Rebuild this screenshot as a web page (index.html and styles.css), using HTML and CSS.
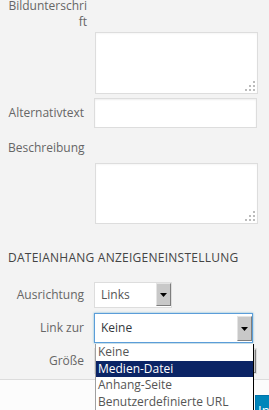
FILE: index.html
```html
<!DOCTYPE html>
<html lang="de">
<head>
<meta charset="utf-8">
<link rel="stylesheet" href="styles.css">
</head>
<body>
<div class="panel">
  <div class="setting stacked first">
    <span class="name wrap">Bildunterschrift</span>
    <div class="area caption">
      <svg class="grip" width="10" height="10" viewBox="0 0 10 10"><rect x="8" y="0" width="2" height="2"/><rect x="4" y="4" width="2" height="2"/><rect x="8" y="4" width="2" height="2"/><rect x="0" y="8" width="2" height="2"/><rect x="4" y="8" width="2" height="2"/><rect x="8" y="8" width="2" height="2"/></svg>
    </div>
  </div>
  <div class="setting inline alt">
    <span class="name">Alternativtext</span>
    <div class="text-input"></div>
  </div>
  <div class="setting stacked desc">
    <span class="name">Beschreibung</span>
    <div class="area description">
      <svg class="grip" width="10" height="10" viewBox="0 0 10 10"><rect x="8" y="0" width="2" height="2"/><rect x="4" y="4" width="2" height="2"/><rect x="8" y="4" width="2" height="2"/><rect x="0" y="8" width="2" height="2"/><rect x="4" y="8" width="2" height="2"/><rect x="8" y="8" width="2" height="2"/></svg>
    </div>
  </div>
  <h2 class="section-title">DATEIANHANG ANZEIGENEINSTELLUNG</h2>
  <div class="setting inline align-row">
    <span class="name">Ausrichtung</span>
    <div class="combo small">
      <span class="value muted">Links</span>
      <span class="arrow-btn"><svg width="7" height="4" viewBox="0 0 7 4"><polygon points="0,0 7,0 3.5,4"/></svg></span>
    </div>
  </div>
  <div class="setting inline link-row">
    <span class="name">Link zur</span>
    <div class="combo wide focus">
      <span class="value">Keine</span>
      <span class="arrow-btn tall"><svg width="7" height="4" viewBox="0 0 7 4"><polygon points="0,0 7,0 3.5,4"/></svg></span>
      <ul class="dropdown">
        <li>Keine</li>
        <li class="selected">Medien-Datei</li>
        <li>Anhang-Seite</li>
        <li>Benutzerdefinierte URL</li>
      </ul>
    </div>
  </div>
  <div class="setting inline size-row">
    <span class="name">Größe</span>
    <div class="combo size">
      <span class="value"></span>
      <span class="arrow-btn"><svg width="7" height="4" viewBox="0 0 7 4"><polygon points="0,0 7,0 3.5,4"/></svg></span>
    </div>
  </div>
</div>
<div class="toolbar">
  <span class="primary">In Beitrag einfügen</span>
</div>
</body>
</html>
```

FILE: styles.css
```css
html, body {
  margin: 0;
  padding: 0;
}
body {
  width: 269px;
  height: 410px;
  overflow: hidden;
  background: #f3f3f3;
  font-family: "Open Sans", "Noto Sans", sans-serif;
  font-size: 12px;
  line-height: 16px;
  color: #666;
}
.panel {
  padding: 0 11px 0 8px;
}
.setting {
  display: flex;
}
.setting.stacked {
  flex-direction: column;
}
.setting.inline {
  align-items: center;
}
.name {
  display: block;
  width: 76px;
  text-align: right;
  flex: none;
}
.inline .name {
  margin-right: 10px;
}
.name.wrap {
  width: 79px;
  word-break: break-all;
}
.first {
  margin-top: -2px;
}
.area {
  position: relative;
  margin-left: 87px;
  width: 161px;
  background: #fff;
  border: 1px solid #ddd;
  box-shadow: inset 0 1px 2px rgba(0,0,0,0.04);
}
.caption {
  margin-top: 2px;
  height: 60px;
}
.grip {
  position: absolute;
  right: 2px;
  bottom: 2px;
  fill: #bcbcbc;
}
.alt {
  margin-top: 4px;
}
.text-input {
  width: 161px;
  height: 28px;
  background: #fff;
  border: 1px solid #ddd;
  box-shadow: inset 0 1px 2px rgba(0,0,0,0.07);
}
.desc {
  margin-top: 12px;
}
.description {
  margin-top: 7px;
  height: 59px;
}
.section-title {
  margin: 26px 0 0 0;
  font-size: 12px;
  line-height: 16px;
  font-weight: 400;
  letter-spacing: 0.25px;
  color: #444;
}
.align-row {
  margin-top: 16px;
}
.link-row {
  margin-top: 5px;
  position: relative;
  z-index: 2;
}
.size-row {
  margin-top: 5px;
}
.combo {
  position: relative;
  display: flex;
  align-items: stretch;
  box-sizing: border-box;
  background: #fff;
  border: 1px solid #ddd;
  color: #32373c;
}
.combo .value {
  flex: 1;
  display: flex;
  align-items: center;
  padding-left: 6px;
}
.combo .value.muted {
  color: #555;
}
.combo.small {
  width: 78px;
  height: 26px;
}
.combo.small .arrow-btn {
  margin: 0 0 1px 0;
}
.combo.wide {
  width: 159px;
  height: 30px;
}
.combo.size {
  width: 163px;
  height: 26px;
}
.combo.focus {
  border-color: #5b9dd9;
  box-shadow: 0 0 2px rgba(30,140,190,0.6);
}
.arrow-btn {
  width: 15px;
  box-sizing: border-box;
  display: flex;
  align-items: center;
  justify-content: center;
  background: #c8c8c8;
  border-top: 1px solid #e4e4e4;
  border-left: 1px solid #e4e4e4;
  border-right: 1px solid #7d7d7d;
  border-bottom: 1px solid #7d7d7d;
}
.arrow-btn svg {
  fill: #000;
}
.arrow-btn.tall {
  margin: 2px 0 1px 0;
}
.dropdown {
  position: absolute;
  top: 30px;
  left: 0;
  width: 159px;
  box-sizing: border-box;
  margin: 0;
  padding: 0;
  list-style: none;
  background: #fff;
  border-left: 1px solid #a0a0a0;
  border-right: 1px solid #000;
  color: #555;
  font-size: 12px;
}
.dropdown li {
  height: 16.5px;
  line-height: 16.5px;
  padding-left: 2px;
  white-space: nowrap;
}
.dropdown li.selected {
  background: #0b2465;
  color: #fff;
}
.toolbar {
  margin-top: 5px;
  height: 40px;
  box-sizing: border-box;
  border-top: 1px solid #dcdcdc;
  background: #fcfcfc;
  padding: 15px 0 0 255px;
  white-space: nowrap;
  overflow: hidden;
}
.primary {
  display: inline-block;
  height: 30px;
  line-height: 28px;
  padding: 0 2px;
  background: #0085ba;
  border: 1px solid #0073aa;
  color: #fff;
  font-size: 13px;
}
```
